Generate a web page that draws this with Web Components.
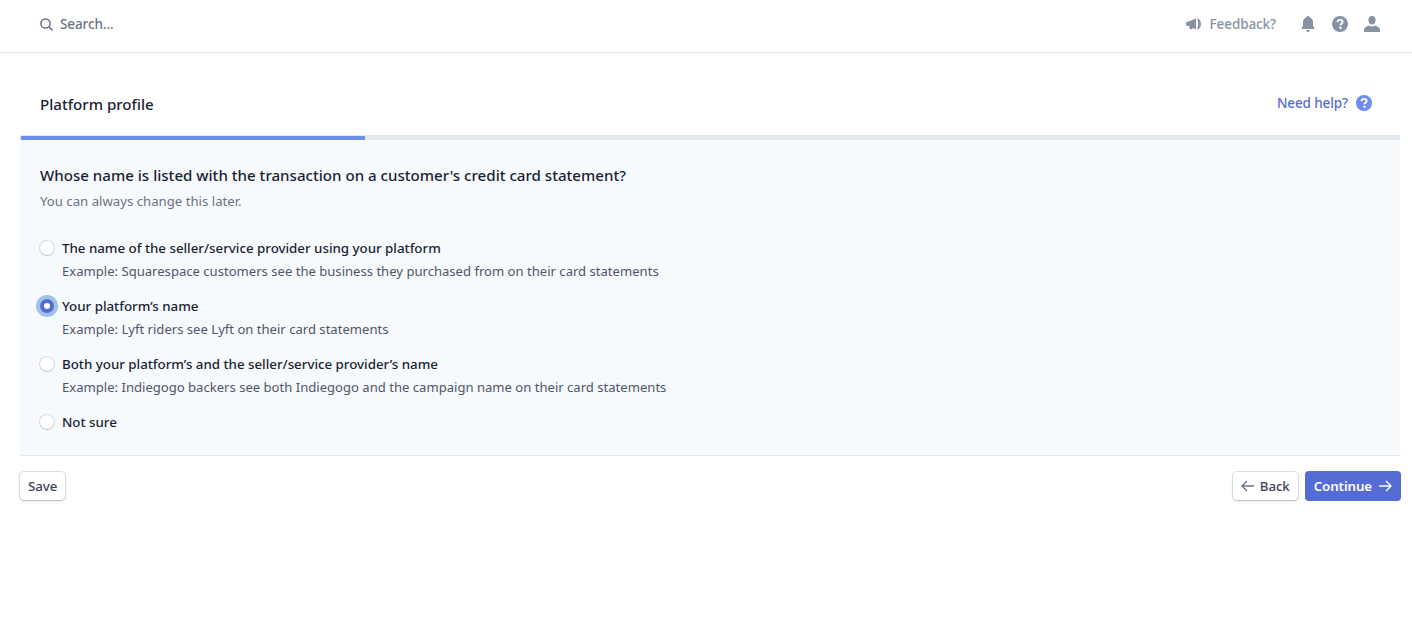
<!DOCTYPE html>
<html>
<head>
<meta charset="utf-8">
<title>Platform profile</title>
<style>
	html, body { margin: 0; background: #fff; }
	body { font: 14px/20px "Noto Sans", "Open Sans", sans-serif; color: #3c4257; height: 629px; overflow: hidden; }
</style>
</head>
<body>
<top-bar></top-bar>
<profile-page>
	<radio-option label="The name of the seller/service provider using your platform" hint="Example: Squarespace customers see the business they purchased from on their card statements"></radio-option>
	<radio-option checked label="Your platform’s name" hint="Example: Lyft riders see Lyft on their card statements"></radio-option>
	<radio-option label="Both your platform’s and the seller/service provider’s name" hint="Example: Indiegogo backers see both Indiegogo and the campaign name on their card statements"></radio-option>
	<radio-option label="Not sure"></radio-option>
</profile-page>
<script>
class TopBar extends HTMLElement {
	constructor() {
		super();
		let shadow = this.attachShadow({mode: 'open'});
		shadow.innerHTML = `<style>
				:host { display: flex; align-items: center; height: 48px; padding-bottom: 4px; border-bottom: 1px solid #e3e8ee; padding-left: 40px; padding-right: 32px; font-size: 13.5px; letter-spacing: -.1px; }
				svg { display: block; fill: #8792a2; }
				.search { display: flex; align-items: center; gap: 7px; color: #697386; font-weight: 500; flex: 1; }
				.feedback { display: flex; align-items: center; gap: 9px; color: #8792a2; font-weight: 500; margin-right: 24px; }
				.icons { display: flex; align-items: center; gap: 16px; }
			</style>
			<div class="search">
				<svg width="13" height="13" viewBox="0 0 13 13" style="fill:none;stroke:#697386;stroke-width:1.5"><circle cx="5.5" cy="5.5" r="4.6"/><path d="M8.900 8.900L12.400 12.400"/></svg>
				<span>Search...</span>
			</div>
			<div class="feedback">
				<svg width="15" height="12" viewBox="0 0 15 12"><path d="M0 4.500L10 .6V11.200L6.800 10 5.800 11.400 3 10.200 3.800 8.400 0 7.200Z"/><path d="M11 .6C13.200 .6 15 3 15 6s-1.800 5.400-4 5.400C12.500 9.500 12.500 2.500 11 .6Z"/></svg>
				<span>Feedback?</span>
			</div>
			<div class="icons">
				<svg width="16" height="16" viewBox="0 0 16 16"><path d="M8 0c.8 0 1.300.5 1.400 1.200C11.600 1.800 13 3.700 13 6v3.500c0 .8.500 1.500 1.500 2.500v1h-13v-1c1-1 1.500-1.700 1.500-2.500V6c0-2.300 1.400-4.200 3.600-4.800C6.700.5 7.200 0 8 0ZM6 14h4c0 1.200-.9 2-2 2s-2-.8-2-2Z"/></svg>
				<help-icon size="16" color="#8792a2"></help-icon>
				<svg width="16" height="16" viewBox="0 0 16 16"><path d="M8 0c2.200 0 3.600 1.700 3.600 3.900S10.200 8.600 8 8.600 4.400 6.100 4.400 3.900 5.800 0 8 0ZM0 14c0-2.600 3-3.800 5.400-4.400.8.600 1.700.9 2.600.9s1.800-.3 2.600-.9C13 10.200 16 11.400 16 14v2H0Z"/></svg>
			</div>`;
	}
}

class HelpIcon extends HTMLElement {
	constructor() {
		super();
		let shadow = this.attachShadow({mode: 'open'});
		let size = this.getAttribute('size') || 16;
		let color = this.getAttribute('color') || '#8792a2';
		shadow.innerHTML = `<style>
				:host { display: block; }
				svg { display: block; }
			</style>
			<svg width="${size}" height="${size}" viewBox="0 0 16 16"><circle cx="8" cy="8" r="8" fill="${color}"/><path d="M5.500 6.100C5.600 4.700 6.600 3.900 8.100 3.900c1.500 0 2.500.8 2.500 2 0 1-.5 1.500-1.300 2-.6.400-.8.700-.8 1.300" fill="none" stroke="#fff" stroke-width="1.900"/><circle cx="8.500" cy="11.800" r="1.200" fill="#fff"/></svg>`;
	}
}

class RadioOption extends HTMLElement {
	constructor() {
		super();
		let shadow = this.attachShadow({mode: 'open'});
		let hint = this.getAttribute('hint');
		shadow.innerHTML = `<style>
				:host { display: grid; grid-template-columns: 14px 1fr; column-gap: 8px; }
				.dot { width: 14px; height: 14px; border-radius: 50%; background: #fff; box-shadow: 0 0 0 1px rgba(60,66,87,.16), 0 1px 1px rgba(0,0,0,.12); margin-top: 3px; box-sizing: border-box; }
				:host([checked]) .dot { background: #556cd6; box-shadow: 0 0 0 4px rgba(122,171,220,.7); display: flex; align-items: center; justify-content: center; }
				:host([checked]) .dot::after { content: ""; width: 6px; height: 6px; border-radius: 50%; background: #fff; }
				.label { color: #1a1f36; font-weight: 500; font-size: 13.35px; letter-spacing: -.02px; }
				.hint { grid-column: 2; color: #4f566b; font-size: 13.08px; margin-top: 3px; }
			</style>
			<span class="dot"></span>
			<span class="label">${this.getAttribute('label')}</span>
			${hint ? `<span class="hint">${hint}</span>` : ''}`;
	}
}

class ActionButton extends HTMLElement {
	constructor() {
		super();
		let shadow = this.attachShadow({mode: 'open'});
		shadow.innerHTML = `<style>
				:host { display: inline-flex; align-items: center; gap: 7px; height: 28px; padding: 0 8px; border-radius: 4px; background: #fff; color: #3c4257; font-weight: 500; font-size: 13.3px; letter-spacing: -.1px; box-shadow: 0 0 0 1px rgba(60,66,87,.16), 0 1px 1px rgba(0,0,0,.12), 0 2px 5px rgba(60,66,87,.08); }
				:host([primary]) { background: #556cd6; color: #fff; font-weight: 600; padding: 0 9px; height: 30px; box-shadow: none; }
				:host(.back) { gap: 6px; }
			</style>
			<slot></slot>`;
	}
}

class ProfilePage extends HTMLElement {
	constructor() {
		super();
		let shadow = this.attachShadow({mode: 'open'});
		shadow.innerHTML = `<style>
				:host { display: block; padding: 0 12px 0 20px; }
				.head { display: flex; justify-content: space-between; height: 82px; padding: 41px 28px 0 20px; box-sizing: border-box; }
				h1 { margin: 0; font-size: 15.1px; font-weight: 500; color: #1a1f36; }
				.help { display: flex; align-items: center; gap: 8px; height: 20px; margin-top: -1px; color: #556cd6; font-weight: 500; font-size: 13.5px; letter-spacing: -.1px; }
				.track { height: 4px; border-top: 1px solid #e3e8ee; border-left: 1px solid #e3e8ee; background: #e3e8ee; }
				.fill { width: 344px; height: 100%; background: #6c8eef; }
				.panel { background: #f7fafc; padding: 25px 20px 23px; border-bottom: 1px solid #e3e8ee; height: 267px; }
				h2 { margin: 0; font-size: 15.1px; font-weight: 500; color: #1a1f36; line-height: 20px; }
				.sub { color: #697386; font-size: 13.2px; margin-top: 6px; }
				.options { display: grid; row-gap: 15px; margin-top: 27px; }
				.foot { display: flex; align-items: center; padding-top: 15px; margin-right: -1px; }
				.back { margin-left: auto; margin-right: 7px; }
				svg { display: block; }
			</style>
			<div class="head">
				<h1>Platform profile</h1>
				<div class="help"><span>Need help?</span><help-icon size="16" color="#6c8eef"></help-icon></div>
			</div>
			<div class="track"><div class="fill"></div></div>
			<div class="panel">
				<h2>Whose name is listed with the transaction on a customer's credit card statement?</h2>
				<div class="sub">You can always change this later.</div>
				<div class="options"><slot></slot></div>
			</div>
			<div class="foot">
				<action-button>Save</action-button>
				<action-button class="back"><svg width="13" height="12" viewBox="0 0 13 12" fill="none" stroke="#697386" stroke-width="1.400"><path d="M13 6H1M6 1L1 6l5 5"/></svg>Back</action-button>
				<action-button primary>Continue<svg width="13" height="12" viewBox="0 0 13 12" fill="none" stroke="#fff" stroke-width="1.400"><path d="M0 6h12M7 1l5 5-5 5"/></svg></action-button>
			</div>`;
	}
}

customElements.define('help-icon', HelpIcon);
customElements.define('top-bar', TopBar);
customElements.define('radio-option', RadioOption);
customElements.define('action-button', ActionButton);
customElements.define('profile-page', ProfilePage);
</script>
</body>
</html>
